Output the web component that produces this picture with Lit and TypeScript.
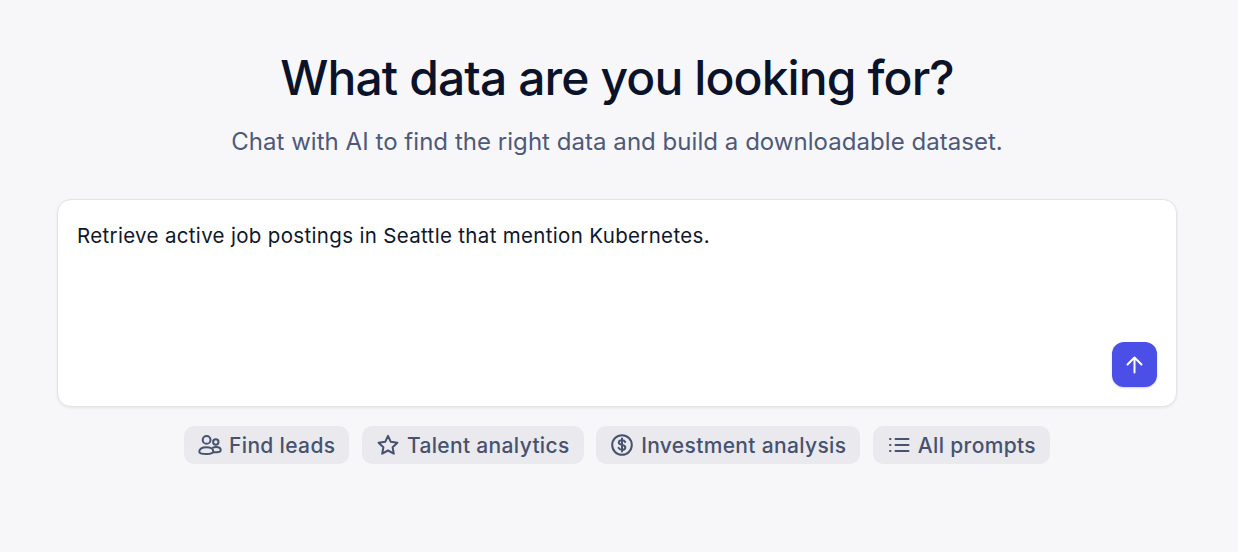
import { LitElement, html, css, svg } from "lit";
import { customElement } from "lit/decorators.js";

const common = (inner: unknown) => html`<svg class="ico" viewBox="0 0 24 24" fill="none" stroke="currentColor" stroke-width="2" stroke-linecap="round" stroke-linejoin="round">${inner}</svg>`;

const users = common(svg`<circle cx="8.6" cy="6.9" r="3.9"/><circle cx="17.8" cy="9" r="2.7"/><path d="M1.3 18.8c0-2.9 3-4.6 7.2-4.6 3.9 0 6.8 1.7 6.8 4.1 0 1.9-2.8 2.8-6.8 2.8-4.2 0-7.2-.6-7.2-2.3z"/><path d="M15 14.6c.9-.5 2-.7 3-.7 2.7 0 4.7 1.3 4.7 3.2 0 1.4-1.7 2.2-4.2 2.2h-3"/>`);
const star = common(svg`<path d="M12 2.8l2.8 6 6.6.9-4.8 4.5 1.2 6.5L12 17.5l-5.8 3.2 1.2-6.5-4.8-4.5 6.6-.9z"/>`);
const dollar = common(svg`<circle cx="12" cy="12" r="9.8"/><path d="M15.2 8.9c-.6-1.1-1.8-1.7-3.2-1.7-1.8 0-3.2.9-3.2 2.4 0 3.4 6.5 1.5 6.5 4.8 0 1.5-1.5 2.4-3.3 2.4-1.5 0-2.8-.7-3.4-1.9M12 5.4v13.2"/>`);
const list = common(svg`<path d="M8.5 6h13M8.5 12h13M8.5 18h13M3 6h.5M3 12h.5M3 18h.5"/>`);

@customElement("app-root")
export class AppRoot extends LitElement {
  static styles = css`
    :host {
      display: block;
      min-height: 552px;
      background: #f7f7fa;
      font-family: "Inter", "Noto Sans", sans-serif;
      box-sizing: border-box;
      padding: 44px 4px 0 0;
    }
    .wrap {
      width: 1120px;
      margin: 0 auto;
      display: flex;
      flex-direction: column;
      align-items: center;
    }
    h1 {
      margin: 0;
      font-size: 48px;
      line-height: 68px;
      font-weight: 550;
      letter-spacing: -0.9px;
      color: #0a1329;
      white-space: nowrap;
    }
    .sub {
      margin: 14px 0 0;
      font-size: 24px;
      line-height: 32px;
      font-weight: 400;
      letter-spacing: 0.04px;
      color: #4d5a78;
      white-space: nowrap;
    }
    .card {
      box-sizing: border-box;
      width: 100%;
      height: 208px;
      margin-top: 41px;
      padding: 21px 19px 19px;
      background: #fff;
      border: 1px solid #e3e4ea;
      border-radius: 14px;
      box-shadow: 0 1px 3px rgba(16, 24, 40, 0.08);
      display: flex;
      flex-direction: column;
      justify-content: space-between;
    }
    .prompt {
      font-size: 20.5px;
      line-height: 30px;
      letter-spacing: 0.33px;
      color: #0f172a;
      white-space: nowrap;
    }
    .send {
      align-self: flex-end;
      width: 45px;
      height: 45px;
      border: 0;
      padding: 0;
      border-radius: 12px;
      background: #4b4fe8;
      box-shadow: 0 1px 2px rgba(16, 24, 40, 0.2);
      color: #fff;
      display: flex;
      align-items: center;
      justify-content: center;
    }
    .send svg { width: 24px; height: 24px; }
    .chips {
      display: flex;
      gap: 12.5px;
      margin-top: 19px;
    }
    .chip {
      display: flex;
      align-items: center;
      gap: 7px;
      height: 38px;
      padding: 0 14px;
      border-radius: 10px;
      background: #e9e9ee;
      color: #46526f;
      font-size: 21px;
      letter-spacing: 0.34px;
      font-weight: 500;
      white-space: nowrap;
    }
    .ico { width: 24px; height: 24px; flex: none; }
  `;

  render() {
    return html`
      <div class="wrap">
        <h1>What data are you looking for?</h1>
        <p class="sub">Chat with AI to find the right data and build a downloadable dataset.</p>
        <div class="card">
          <div class="prompt">Retrieve active job postings in Seattle that mention Kubernetes.</div>
          <button class="send" aria-label="Send">
            <svg viewBox="0 0 24 24" fill="none" stroke="currentColor" stroke-width="2" stroke-linecap="round" stroke-linejoin="round"><path d="M11.5 19.5V4.5M4.5 11.5l7-7 7 7"/></svg>
          </button>
        </div>
        <div class="chips">
          <div class="chip">${users}<span>Find leads</span></div>
          <div class="chip">${star}<span>Talent analytics</span></div>
          <div class="chip">${dollar}<span>Investment analysis</span></div>
          <div class="chip">${list}<span>All prompts</span></div>
        </div>
      </div>
    `;
  }
}
